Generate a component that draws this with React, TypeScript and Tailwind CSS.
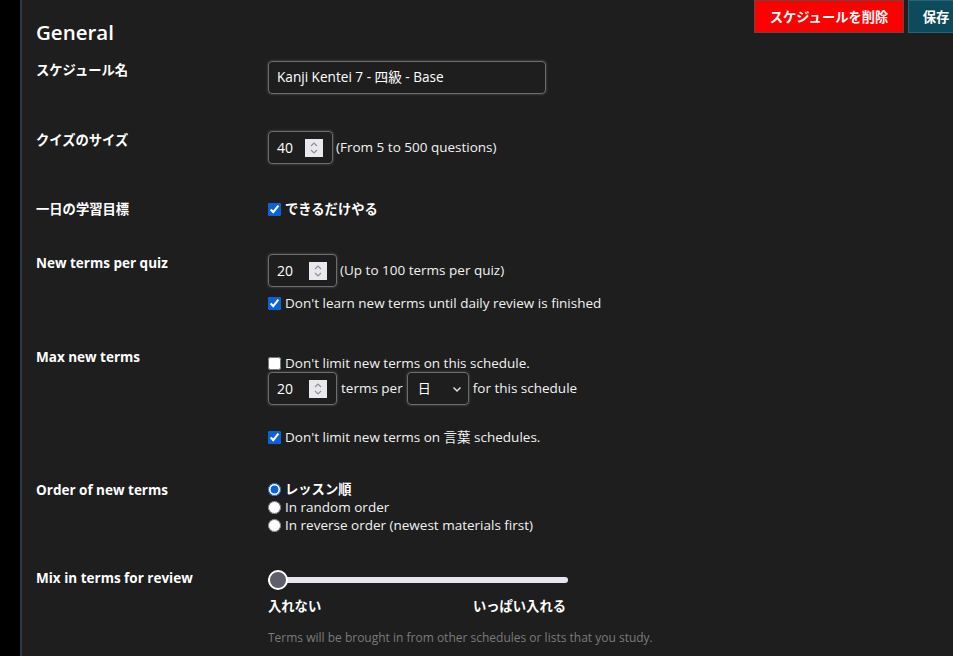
import type { ReactNode } from 'react';

const JP = "font-['Noto_Sans_CJK_JP',sans-serif] font-bold text-[13.3px]";

function Label({ children, jp }: { children: ReactNode; jp?: boolean }) {
  return (
    <div
      className={
        'w-[232px] shrink-0 leading-5 text-white ' +
        (jp ? JP : 'text-[13.5px] font-bold')
      }
    >
      {children}
    </div>
  );
}

function Spinner() {
  return (
    <div className="flex h-[18px] w-[18px] items-center justify-center bg-[#e9e9ed]">
      <svg width="10" height="14" viewBox="0 0 10 14" fill="none" stroke="#8e8e98" strokeWidth="1.2">
        <polyline points="2,5 5,2 8,5" />
        <polyline points="2,9 5,12 8,9" />
      </svg>
    </div>
  );
}

function NumberBox({ value, width }: { value: string; width: string }) {
  return (
    <div
      className={
        'flex h-[33px] shrink-0 items-center justify-between rounded-[4px] border border-[#6e6e6e] pl-[8px] pr-[9px] shadow-[0_0_3px_rgba(255,255,255,0.25)] ' +
        width
      }
    >
      <span className="text-[14px] text-white">{value}</span>
      <Spinner />
    </div>
  );
}

function Check({ checked, children }: { checked: boolean; children: ReactNode }) {
  return (
    <label className="flex items-center gap-[4px]">
      <input type="checkbox" defaultChecked={checked} className="h-[13px] w-[13px] accent-[#0b62d6]" />
      <span>{children}</span>
    </label>
  );
}

function Radio({ checked, children }: { checked?: boolean; children: ReactNode }) {
  return (
    <label className="flex h-[18px] items-center gap-[4px]">
      <input type="radio" name="order" defaultChecked={checked} className="h-[13px] w-[13px] accent-[#0b62d6]" />
      <span>{children}</span>
    </label>
  );
}

export default function App() {
  return (
    <div className="flex h-[656px] w-[953px] overflow-hidden bg-black font-['Open_Sans','Noto_Sans_CJK_JP',sans-serif] text-[13.5px] text-[#f2f2f2]">
      <div className="w-[20px] shrink-0 bg-black" />
      <div className="w-[2px] shrink-0 bg-[#2b3b46]" />
      <main className="flex-1 overflow-hidden bg-[#1e1e1e] pl-[14px]">
        <header className="flex items-start justify-between">
          <h1 className="mt-[18px] text-[20.5px] font-semibold leading-7 text-white">General</h1>
          <div className="mr-[-11px] flex gap-[4px]">
            <button className={'h-[33px] w-[150px] border border-[#5e4a4a] bg-[#ff0000] text-white ' + JP}>
              スケジュールを削除
            </button>
            <button className={'h-[33px] w-[56px] border border-[#2a6474] bg-[#0d4a5b] text-white ' + JP}>
              保存
            </button>
          </div>
        </header>

        <section className="mt-[14px] flex items-start">
          <Label jp>スケジュール名</Label>
          <div className="mt-px flex h-[33px] w-[278px] items-center rounded-[4px] border border-[#6e6e6e] pl-[8px] text-[13.6px] text-white shadow-[0_0_3px_rgba(255,255,255,0.25)]">
            Kanji Kentei 7 - 四級 - Base
          </div>
        </section>

        <section className="mt-[36px] flex items-start">
          <Label jp>クイズのサイズ</Label>
          <div className="mt-px flex items-center gap-[3px]">
            <NumberBox value="40" width="w-[65px]" />
            <span>(From 5 to 500 questions)</span>
          </div>
        </section>

        <section className="mt-[35px] flex items-start">
          <Label jp>一日の学習目標</Label>
          <div className="leading-5">
            <Check checked>
              <span className={JP + ' text-white'}>できるだけやる</span>
            </Check>
          </div>
        </section>

        <section className="mt-[34px] flex items-start">
          <Label>New terms per quiz</Label>
          <div className="mt-px flex flex-col">
            <div className="flex items-center gap-[3px]">
              <NumberBox value="20" width="w-[69px]" />
              <span>(Up to 100 terms per quiz)</span>
            </div>
            <div className="mt-[6px] leading-5">
              <Check checked>Don't learn new terms until daily review is finished</Check>
            </div>
          </div>
        </section>

        <section className="mt-[34px] flex items-start">
          <Label>Max new terms</Label>
          <div className="flex flex-col pt-[7px]">
            <div className="leading-[18px]">
              <Check checked={false}>Don't limit new terms on this schedule.</Check>
            </div>
            <div className="flex items-center gap-[4px]">
              <NumberBox value="20" width="w-[69px]" />
              <span>terms per</span>
              <div className="flex h-[33px] w-[62px] items-center justify-between rounded-[4px] border border-[#6e6e6e] pl-[10px] pr-[5px] shadow-[0_0_3px_rgba(255,255,255,0.25)]">
                <span className="text-[13px] text-white">日</span>
                <svg width="12" height="12" viewBox="0 0 12 12" fill="none" stroke="#e0e0e0" strokeWidth="1.5">
                  <polyline points="2.5,4.5 6,8 9.5,4.5" />
                </svg>
              </div>
              <span>for this schedule</span>
            </div>
            <div className="mt-[22px] leading-5">
              <Check checked>Don't limit new terms on 言葉 schedules.</Check>
            </div>
          </div>
        </section>

        <section className="mt-[33px] flex items-start">
          <Label>Order of new terms</Label>
          <div className="flex flex-col">
            <Radio checked>
              <span className={JP + ' text-white'}>レッスン順</span>
            </Radio>
            <Radio>In random order</Radio>
            <Radio>In reverse order (newest materials first)</Radio>
          </div>
        </section>

        <section className="mt-[34px] flex items-start">
          <Label>Mix in terms for review</Label>
          <div className="flex flex-col pt-[2px]">
            <div className="relative flex h-[20px] w-[300px] items-center">
              <div className="h-[6px] w-full rounded-full bg-[#e6e6ee]" />
              <div className="absolute left-0 top-0 h-[20px] w-[20px] rounded-full border-2 border-white bg-[#5f5e6b]" />
            </div>
            <div className={'mt-[7px] flex w-[298px] justify-between leading-[18px] text-white ' + JP}>
              <span>入れない</span>
              <span>いっぱい入れる</span>
            </div>
            <p className="mt-[15px] text-[12px] leading-4 text-[#7b7b7b]">
              Terms will be brought in from other schedules or lists that you study.
            </p>
          </div>
        </section>
      </main>
    </div>
  );
}
